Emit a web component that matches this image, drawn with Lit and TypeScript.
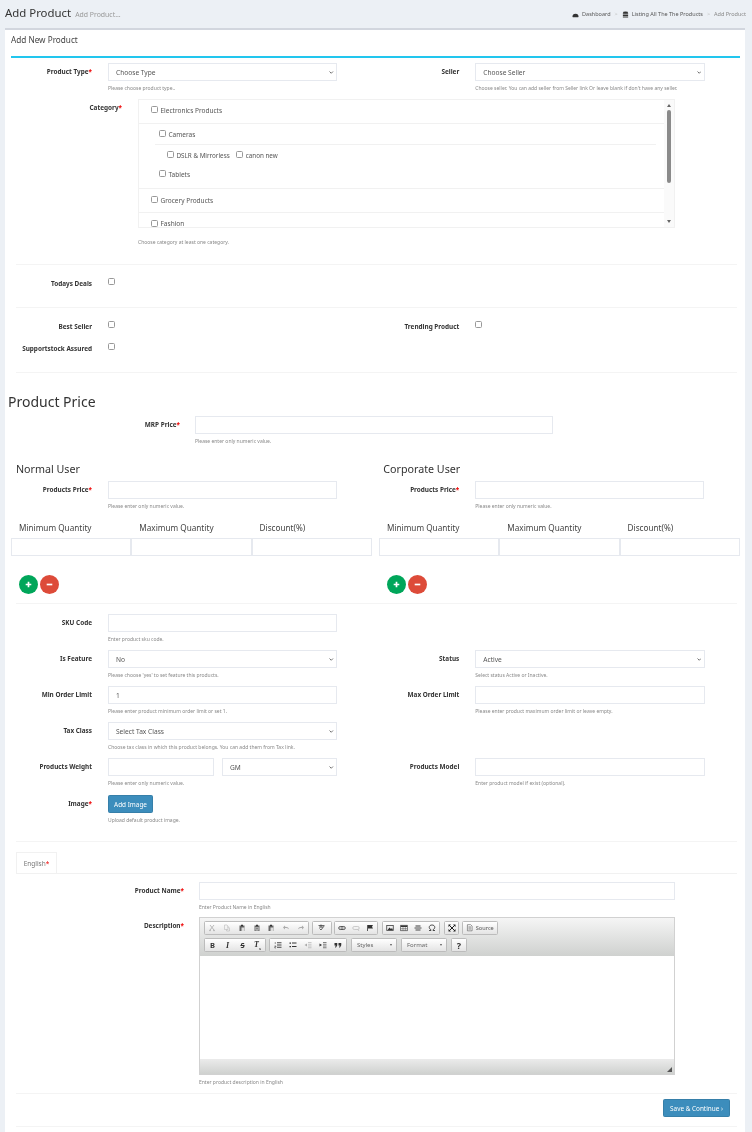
import { LitElement, html, css, svg } from "lit";
import { customElement } from "lit/decorators.js";

const ICONS: Record<string, any> = {
  cut: svg`<path d="M4 2l8 10M12 2L4 12" stroke="#aaa" stroke-width="1.6" fill="none"/><circle cx="4" cy="13" r="1.6" fill="#aaa"/><circle cx="12" cy="13" r="1.6" fill="#aaa"/>`,
  copy: svg`<path d="M3 2h5l2 2v7H3zM8 6h3l2 2v6H7v-3" stroke="#bbb" stroke-width="1.2" fill="none"/>`,
  paste: svg`<path d="M3 3h10v11H3z" fill="#666"/><path d="M6 1.5h4v3H6z" fill="#333"/><path d="M7 7h6v7H7z" fill="#ddd"/>`,
  pasteT: svg`<path d="M3 3h10v11H3z" fill="#666"/><path d="M6 1.5h4v3H6z" fill="#333"/><path d="M5 6h6v7H5z" fill="#ddd"/><path d="M6 8h4M8 8v4" stroke="#333" stroke-width="1.2"/>`,
  undo: svg`<path d="M2 7l4-4v2.5c4 0 7 1.5 8 5-2-2-4-2.5-8-2.5V11z" fill="#aaa"/>`,
  redo: svg`<path d="M14 7l-4-4v2.5c-4 0-7 1.5-8 5 2-2 4-2.5 8-2.5V11z" fill="#aaa"/>`,
  spell: svg`<path d="M1 3h11M2 6h8M6 1v6M3 9l3 3 7-9" stroke="#444" stroke-width="1.6" fill="none"/>`,
  link: svg`<rect x="1.5" y="5" width="13" height="6" rx="3" fill="none" stroke="#444" stroke-width="1.8"/><path d="M5 8h6" stroke="#444" stroke-width="1.8"/>`,
  unlink: svg`<rect x="1.5" y="5" width="13" height="6" rx="3" fill="none" stroke="#bbb" stroke-width="1.5"/><path d="M11 10l3 4" stroke="#bbb" stroke-width="1.5"/>`,
  flag: svg`<path d="M3 2v12" stroke="#333" stroke-width="1.6"/><path d="M4 2h10l-2 3.5 2 3.5H4z" fill="#333"/>`,
  image: svg`<rect x="1.5" y="3" width="13" height="10" fill="#eee" stroke="#333" stroke-width="1.5"/><path d="M3 12l4-5 3 3 2-2 2 4z" fill="#333"/>`,
  table: svg`<rect x="1.5" y="2.5" width="13" height="11" fill="#fff" stroke="#333" stroke-width="1.3"/><path d="M1.5 3h13v3h-13z" fill="#333"/><path d="M1.5 9.5h13M6 6v7M10.5 6v7" stroke="#333"/>`,
  hr: svg`<path d="M3 2h10v4H3zM3 10h10v4H3z" fill="#999"/><path d="M1 8h14" stroke="#222" stroke-width="1.6"/>`,
  omega: svg`<path d="M2 13h4v-1.5C3.5 10 2.5 8.5 2.5 6.5 2.5 3.5 5 2 8 2s5.5 1.5 5.5 4.5c0 2-1 3.5-3.5 5V13h4" fill="none" stroke="#333" stroke-width="1.7"/>`,
  max: svg`<path d="M2 2l12 12M14 2L2 14" stroke="#222" stroke-width="2"/><path d="M1 1h5L1 6zM15 1v5l-5-5zM1 15v-5l5 5zM15 15h-5l5-5z" fill="#222"/>`,
  source: svg`<path d="M3 1.5h7l3 3v10H3z" fill="#fff" stroke="#555" stroke-width="1.3"/><path d="M5 6h6M5 8.5h6M5 11h6" stroke="#555" stroke-width="1.2"/>`,
  ol: svg`<path d="M6 3.5h9M6 8h9M6 12.5h9" stroke="#333" stroke-width="1.8"/><path d="M2.5 2v4M1 10h3v1.5H1.5V14H4" stroke="#333" fill="none"/>`,
  ul: svg`<path d="M6 4h9M6 11h9" stroke="#333" stroke-width="2"/><path d="M1 3h3v2.5H1zM1 10h3v2.5H1z" fill="#333"/>`,
  outdent: svg`<path d="M8 3h7M8 6.5h7M8 10h7M8 13.5h7" stroke="#aaa" stroke-width="1.2"/><path d="M6 5v6L1 8z" fill="#aaa"/>`,
  indent: svg`<path d="M8 3h7M8 6.5h7M8 10h7M8 13.5h7" stroke="#333" stroke-width="1.2"/><path d="M1 5v6l5-3z" fill="#333"/>`,
  quote: svg`<path d="M1 4h5.5v4.5L4 13H2l1.5-4H1zM9 4h5.5v4.5L12 13h-2l1.5-4H9z" fill="#333"/>`,
};

@customElement("app-root")
export class AppRoot extends LitElement {
  static styles = css`
    :host {
      display: block;
      height: 1132px;
      overflow: hidden;
      background: #ecf0f5;
      font-family: "Noto Sans", "Open Sans", sans-serif;
      color: #333;
    }
    .page { filter: blur(0.3px); }
    .head { height: 28px; display: flex; align-items: center; justify-content: space-between; padding: 0 6px 0 5px; }
    .head h1 { margin: 0; font-size: 11.4px; font-weight: 400; line-height: 28px; }
    .head small { font-size: 6.9px; color: #999; margin-left: 4px; font-weight: 400; }
    .crumbs { display: flex; align-items: center; font-size: 5.5px; color: #555; }
    .crumbs svg { width: 7px; height: 7px; margin-right: 3px; }
    .crumbs .sep { color: #bbb; margin: 0 4px; }
    .crumbs .cur { color: #888; }
    .card { margin-left: 5px; width: 740px; height: 1104px; background: #fff; border-top: 2px solid #d2d6de; box-sizing: border-box; }
    .boxtitle { height: 26px; padding: 0 0 7px 6px; box-sizing: border-box; display: flex; align-items: center; font-size: 8.2px; color: #444; }
    .cyan { height: 2px; margin: 0 5px 0 6px; background: #22c6ee; }
    form { padding: 5px 0 0 3px; display: block; }
    .pair { display: grid; grid-template-columns: 367.3px 367.3px; }
    .field { display: grid; grid-template-columns: 84px 229px; column-gap: 16px; margin-bottom: 7px; }
    .pair > .field:nth-child(2) { grid-template-columns: 84px 229.7px; }
    .f-cat { grid-template-columns: 114px 537px; margin-bottom: 0; }
    .f-mrp { grid-template-columns: 172px 358px; column-gap: 15px; margin-bottom: 0; }
    .f-name { grid-template-columns: 176px 476px; column-gap: 15px; margin-bottom: 6px; }
    .lbl { font-size: 6.4px; font-weight: 700; text-align: right; line-height: 18px; color: #333; white-space: nowrap; }
    .req { color: #e00; }
    .ctl { height: 18px; width: 100%; box-sizing: border-box; border: 1px solid #e6e9ef; background: #fff; font: inherit; font-size: 6.6px; color: #555; padding: 0 7px; margin: 0; display: block; outline: none; border-radius: 0; }
    select.ctl { appearance: none; -webkit-appearance: none; }
    .selwrap { position: relative; display: block; }
    .selwrap svg { position: absolute; right: 3.5px; top: 7.5px; width: 4.5px; height: 3px; pointer-events: none; }
    .help { font-size: 5px; line-height: 8px; margin-top: 3px; color: #888; white-space: nowrap; }
    .cat { height: 129px; display: flex; border: 1px solid #f1f1f1; box-sizing: border-box; overflow: hidden; }
    .catlist { flex: 1; overflow: hidden; font-size: 6.5px; color: #555; }
    .cr { display: flex; align-items: center; gap: 3px; }
    .cb { appearance: none; -webkit-appearance: none; width: 7px; height: 7px; border: 1px solid #999; border-radius: 1.5px; margin: 0; background: #fff; box-sizing: border-box; flex: none; display: block; }
    .cr .cb { margin-top: -2px; }
    .c1 { height: 23px; padding-left: 11.5px; border-bottom: 1px solid #f1f1f1; }
    .c1.first { height: 20px; padding-bottom: 3px; }
    .c2 { height: 20px; padding-left: 19.5px; }
    .c2line { height: 1px; background: #f1f1f1; margin: 0 8px 0 15.5px; }
    .c3 { height: 20px; padding-left: 27.5px; font-size: 6.3px; }
    .c3 .cb + span { margin-right: 3px; }
    .c4 { height: 18px; padding: 0 0 5px 19.5px; border-bottom: 1px solid #f1f1f1; }
    .c5 { height: 7px; padding: 7px 0 0 11.5px; }
    .c5 span { line-height: 7px; }
    .c5 .cb { margin-top: -1px; }
    .sb { width: 10px; background: #fafafa; display: flex; flex-direction: column; align-items: center; flex: none; }
    .sb .up, .sb .dn { width: 0; height: 0; border-left: 2.5px solid transparent; border-right: 2.5px solid transparent; }
    .sb .up { border-bottom: 3.5px solid #666; margin-top: 4px; }
    .sb .dn { border-top: 3.5px solid #666; margin-top: 37px; }
    .sb .thumb { width: 4.5px; height: 73px; background: #8a8a8a; border-radius: 2px; margin-top: 3px; }
    .hr { height: 1px; background: #f4f4f4; margin: 0 8px 0 8px; }
    .cbrow { display: grid; grid-template-columns: 84px 229px; column-gap: 16px; height: 12px; }
    .cbrow .lbl { line-height: 8px; margin-top: 2px; }
    .mt18 { margin-top: 18px; }
    .g7 { margin-top: 7px; }
    .g10 { margin-top: 10px; }
    .g13 { margin-top: 13px; }
    .g17 { margin-top: 17px; }
    h2 { margin: 19px 0 4px; font-size: 14px; line-height: 20px; font-weight: 400; color: #333; }
    .sub { margin: 16px 0 4px 8px; font-size: 10.7px; line-height: 16px; font-weight: 400; color: #333; }
    .col .field { margin-bottom: 0; }
    .qlabels, .qinputs { display: grid; grid-template-columns: 120.3px 120.3px 120.3px; margin-left: 3px; }
    .col + .col .qlabels, .col + .col .qinputs { margin-left: 3.7px; }
    .qlabels { margin-top: 13px; font-size: 8.2px; line-height: 10px; color: #444; }
    .qlabels span { padding-left: 8px; }
    .qinputs { margin-top: 5px; }
    .rb { display: flex; gap: 2px; margin: 19px 0 9px 11px; }
    .col + .col .rb { margin-left: 11.7px; }
    .rb div { width: 19px; height: 19px; border-radius: 50%; display: flex; align-items: center; justify-content: center; }
    .rb svg { width: 7px; height: 7px; }
    .plus { background: #00a65a; }
    .minus { background: #dd4b39; }
    .weight { display: grid; grid-template-columns: 106px 115px; gap: 8px; }
    .btn { height: 18px; display: flex; align-items: center; justify-content: center; background: #3c8dbc; border: 1px solid #367fa9; color: #fff; font-size: 6.4px; border-radius: 1.5px; box-sizing: border-box; }
    .addimg { width: 45px; }
    .last { margin-bottom: 17px; }
    .w37 { margin-bottom: 8px; }
    .tabs { margin: 10px 8px 8px 8px; height: 22px; border-bottom: 1px solid #f1f1f1; box-sizing: border-box; }
    .tab { display: flex; width: 41px; height: 21px; align-items: center; justify-content: center; border: 1px solid #f1f1f1; border-bottom: 0; font-size: 6.5px; color: #777; box-sizing: border-box; background: #fff; }
    .editor { height: 158px; border: 1px solid #d1d1d1; box-sizing: border-box; display: flex; flex-direction: column; }
    .tb { height: 38px; background: linear-gradient(#f5f5f5, #cfd1cf); padding: 3px 0 0 4px; box-sizing: border-box; display: flex; flex-direction: column; gap: 3px; flex: none; }
    .tbrow { display: flex; height: 14px; }
    .grp { display: flex; height: 14px; border: 1px solid #bcbcbc; border-radius: 1.5px; background: linear-gradient(#fff, #e4e4e4); box-sizing: border-box; align-items: center; flex: none; }
    .w105 { width: 105px; }
    .w20 { width: 20px; margin-left: 3px; }
    .w44 { width: 44px; margin-left: 2px; }
    .w58 { width: 58px; margin-left: 4px; }
    .w15 { width: 15px; margin-left: 4px; }
    .w36 { width: 36px; margin-left: 3px; }
    .w62 { width: 62px; }
    .w78 { width: 78px; margin-left: 3px; }
    .i { flex: 1 1 0; min-width: 0; height: 12px; display: flex; align-items: center; justify-content: center; font-size: 7.5px; color: #333; font-weight: 700; }
    .i svg { width: 8px; height: 8px; display: block; }
    .i i { font-family: "Liberation Serif", serif; font-size: 8px; }
    .i s { font-size: 7.5px; }
    .i sub { font-size: 4px; }
    .src { justify-content: center; gap: 2px; font-size: 5.6px; color: #555; }
    .src svg { width: 7.5px; height: 7.5px; }
    .combo { width: 46px; margin-left: 4px; justify-content: space-between; padding: 0 4px 0 5px; font-size: 6px; color: #666; }
    .combo em { width: 0; height: 0; border-left: 1.5px solid transparent; border-right: 1.5px solid transparent; border-top: 2px solid #555; }
    .q { width: 16px; margin-left: 4px; justify-content: center; font-weight: 700; font-size: 9px; color: #333; }
    .edbody { flex: 1; background: #fff; }
    .edfoot { height: 15px; background: linear-gradient(#ebebeb, #cfd1cf); display: flex; justify-content: flex-end; align-items: flex-end; padding: 0 2px 2px 0; box-sizing: border-box; flex: none; }
    .edfoot svg { width: 5px; height: 5px; }
    .actions { display: flex; justify-content: flex-end; padding: 5px 15px 9px 0; }
    .save { width: 67px; }
  `;

  private field(label: string, req: boolean, control: unknown, help: string, cls = "") {
    return html`<div class="field ${cls}">
      <div class="lbl">${label}${req ? html`<span class="req">*</span>` : ""}</div>
      <div>${control}${help ? html`<div class="help">${help}</div>` : ""}</div>
    </div>`;
  }
  private sel(t: string) {
    return html`<span class="selwrap"><select class="ctl"><option>${t}</option></select><svg viewBox="0 0 6 4"><path d="M.7.7L3 3l2.3-2.3" fill="none" stroke="#555" stroke-width="1.1"/></svg></span>`;
  }
  private inp(v = "") {
    return html`<input class="ctl" .value=${v} />`;
  }
  private userCol(title: string) {
    return html`<div class="col">
      <div class="sub">${title}</div>
      ${this.field("Products Price", true, this.inp(), "Please enter only numeric value.")}
      <div class="qlabels"><span>Minimum Quantity</span><span>Maximum Quantity</span><span>Discount(%)</span></div>
      <div class="qinputs">${this.inp()}${this.inp()}${this.inp()}</div>
      <div class="rb">
        <div class="plus"><svg viewBox="0 0 10 10"><path d="M5 1v8M1 5h8" stroke="#fff" stroke-width="2.4"/></svg></div>
        <div class="minus"><svg viewBox="0 0 10 10"><path d="M1 5h8" stroke="#fff" stroke-width="2.4"/></svg></div>
      </div>
    </div>`;
  }
  private ic(n: string) {
    return html`<div class="i"><svg viewBox="0 0 16 16">${ICONS[n]}</svg></div>`;
  }
  private toolbar() {
    return html`<div class="tb">
      <div class="tbrow">
        <div class="grp w105">${["cut", "copy", "paste", "pasteT", "paste", "undo", "redo"].map((n) => this.ic(n))}</div>
        <div class="grp w20">${this.ic("spell")}</div>
        <div class="grp w44">${["link", "unlink", "flag"].map((n) => this.ic(n))}</div>
        <div class="grp w58">${["image", "table", "hr", "omega"].map((n) => this.ic(n))}</div>
        <div class="grp w15">${this.ic("max")}</div>
        <div class="grp w36 src"><svg viewBox="0 0 16 16">${ICONS.source}</svg><span>Source</span></div>
      </div>
      <div class="tbrow">
        <div class="grp w62"><div class="i">B</div><div class="i"><i>I</i></div><div class="i"><s>S</s></div><div class="i"><i>T<sub>x</sub></i></div></div>
        <div class="grp w78">${["ol", "ul", "outdent", "indent", "quote"].map((n) => this.ic(n))}</div>
        <div class="grp combo"><span>Styles</span><em></em></div>
        <div class="grp combo"><span>Format</span><em></em></div>
        <div class="grp q">?</div>
      </div>
    </div>`;
  }

  render() {
    return html`<div class="page">
      <div class="head">
        <h1>Add Product<small>Add Product...</small></h1>
        <div class="crumbs">
          <svg viewBox="0 0 16 16"><path d="M1 13a7 7 0 0 1 14 0l-1 1H2zM8 9l3-3-1 5z" fill="#333"/></svg><span>Dashboard</span><span class="sep">&gt;</span>
          <svg viewBox="0 0 16 16"><ellipse cx="8" cy="3" rx="6" ry="2" fill="#333"/><path d="M2 5h12v3H2zM2 9h12v3H2zM2 13h12v2H2z" fill="#333"/></svg><span>Listing All The The Products</span><span class="sep">&gt;</span><span class="cur">Add Product</span>
        </div>
      </div>
      <div class="card">
        <div class="boxtitle">Add New Product</div>
        <div class="cyan"></div>
        <form>
          <div class="pair">
            ${this.field("Product Type", true, this.sel("Choose Type"), "Please choose product type..")}
            ${this.field("Seller", false, this.sel("Choose Seller"), "Choose seller. You can add seller from Seller link Or leave blank if don't have any seller.")}
          </div>
          ${this.field("Category", true, html`<div class="cat">
            <div class="catlist">
              <div class="cr c1 first"><input class="cb" type="checkbox" /><span>Electronics Products</span></div>
              <div class="cr c2"><input class="cb" type="checkbox" /><span>Cameras</span></div>
              <div class="c2line"></div>
              <div class="cr c3"><input class="cb" type="checkbox" /><span>DSLR &amp; Mirrorless</span><input class="cb" type="checkbox" /><span>canon new</span></div>
              <div class="cr c4"><input class="cb" type="checkbox" /><span>Tablets</span></div>
              <div class="cr c1"><input class="cb" type="checkbox" /><span>Grocery Products</span></div>
              <div class="cr c5"><input class="cb" type="checkbox" /><span>Fashion</span></div>
            </div>
            <div class="sb"><div class="up"></div><div class="thumb"></div><div class="dn"></div></div>
          </div><div class="help g10">Choose category at least one category.</div>`, "", "f-cat")}
          <div class="hr mt18"></div>
          <div class="cbrow g13"><div class="lbl">Todays Deals</div><div><input class="cb" type="checkbox" /></div></div>
          <div class="hr g17"></div>
          <div class="pair g13">
            <div class="cbrow"><div class="lbl">Best Seller</div><div><input class="cb" type="checkbox" /></div></div>
            <div class="cbrow"><div class="lbl">Trending Product</div><div><input class="cb" type="checkbox" /></div></div>
          </div>
          <div class="cbrow g10"><div class="lbl">Supportstock Assured</div><div><input class="cb" type="checkbox" /></div></div>
          <div class="hr g17"></div>
          <h2>Product Price</h2>
          ${this.field("MRP Price", true, this.inp(), "Please enter only numeric value.", "f-mrp")}
          <div class="pair">${this.userCol("Normal User")}${this.userCol("Corporate User")}</div>
          <div class="hr"></div>
          <div class="pair g10">${this.field("SKU Code", false, this.inp(), "Enter product sku code.")}</div>
          <div class="pair">
            ${this.field("Is Feature", false, this.sel("No"), "Please choose 'yes' to set feature this products.")}
            ${this.field("Status", false, this.sel("Active"), "Select status Active or Inactive.")}
          </div>
          <div class="pair">
            ${this.field("Min Order Limit", false, this.inp("1"), "Please enter product minimum order limit or set 1.")}
            ${this.field("Max Order Limit", false, this.inp(), "Please enter product maximum order limit or leave empty.")}
          </div>
          ${this.field("Tax Class", false, this.sel("Select Tax Class"), "Choose tax class in which this product belongs. You can add them from Tax link.")}
          <div class="pair">
            ${this.field("Products Weight", false, html`<div class="weight">${this.inp()}${this.sel("GM")}</div>`, "Please enter only numeric value.", "w37")}
            ${this.field("Products Model", false, this.inp(), "Enter product model if exist (optional).", "w37")}
          </div>
          ${this.field("Image", true, html`<div class="btn addimg">Add Image</div>`, "Upload default product image.", "last")}
          <div class="hr"></div>
          <div class="tabs"><div class="tab"><span>English<span class="req">*</span></span></div></div>
          ${this.field("Product Name", true, this.inp(), "Enter Product Name in English", "f-name")}
          ${this.field("Description", true, html`<div class="editor">
            ${this.toolbar()}
            <div class="edbody"></div>
            <div class="edfoot"><svg viewBox="0 0 6 6"><path d="M6 0v6H0z" fill="#555"/></svg></div>
          </div>`, "Enter product description in English", "f-name")}
          <div class="hr g7"></div>
          <div class="actions"><div class="btn save">Save &amp; Continue ›</div></div>
          <div class="hr"></div>
        </form>
      </div>
    </div>`;
  }
}
